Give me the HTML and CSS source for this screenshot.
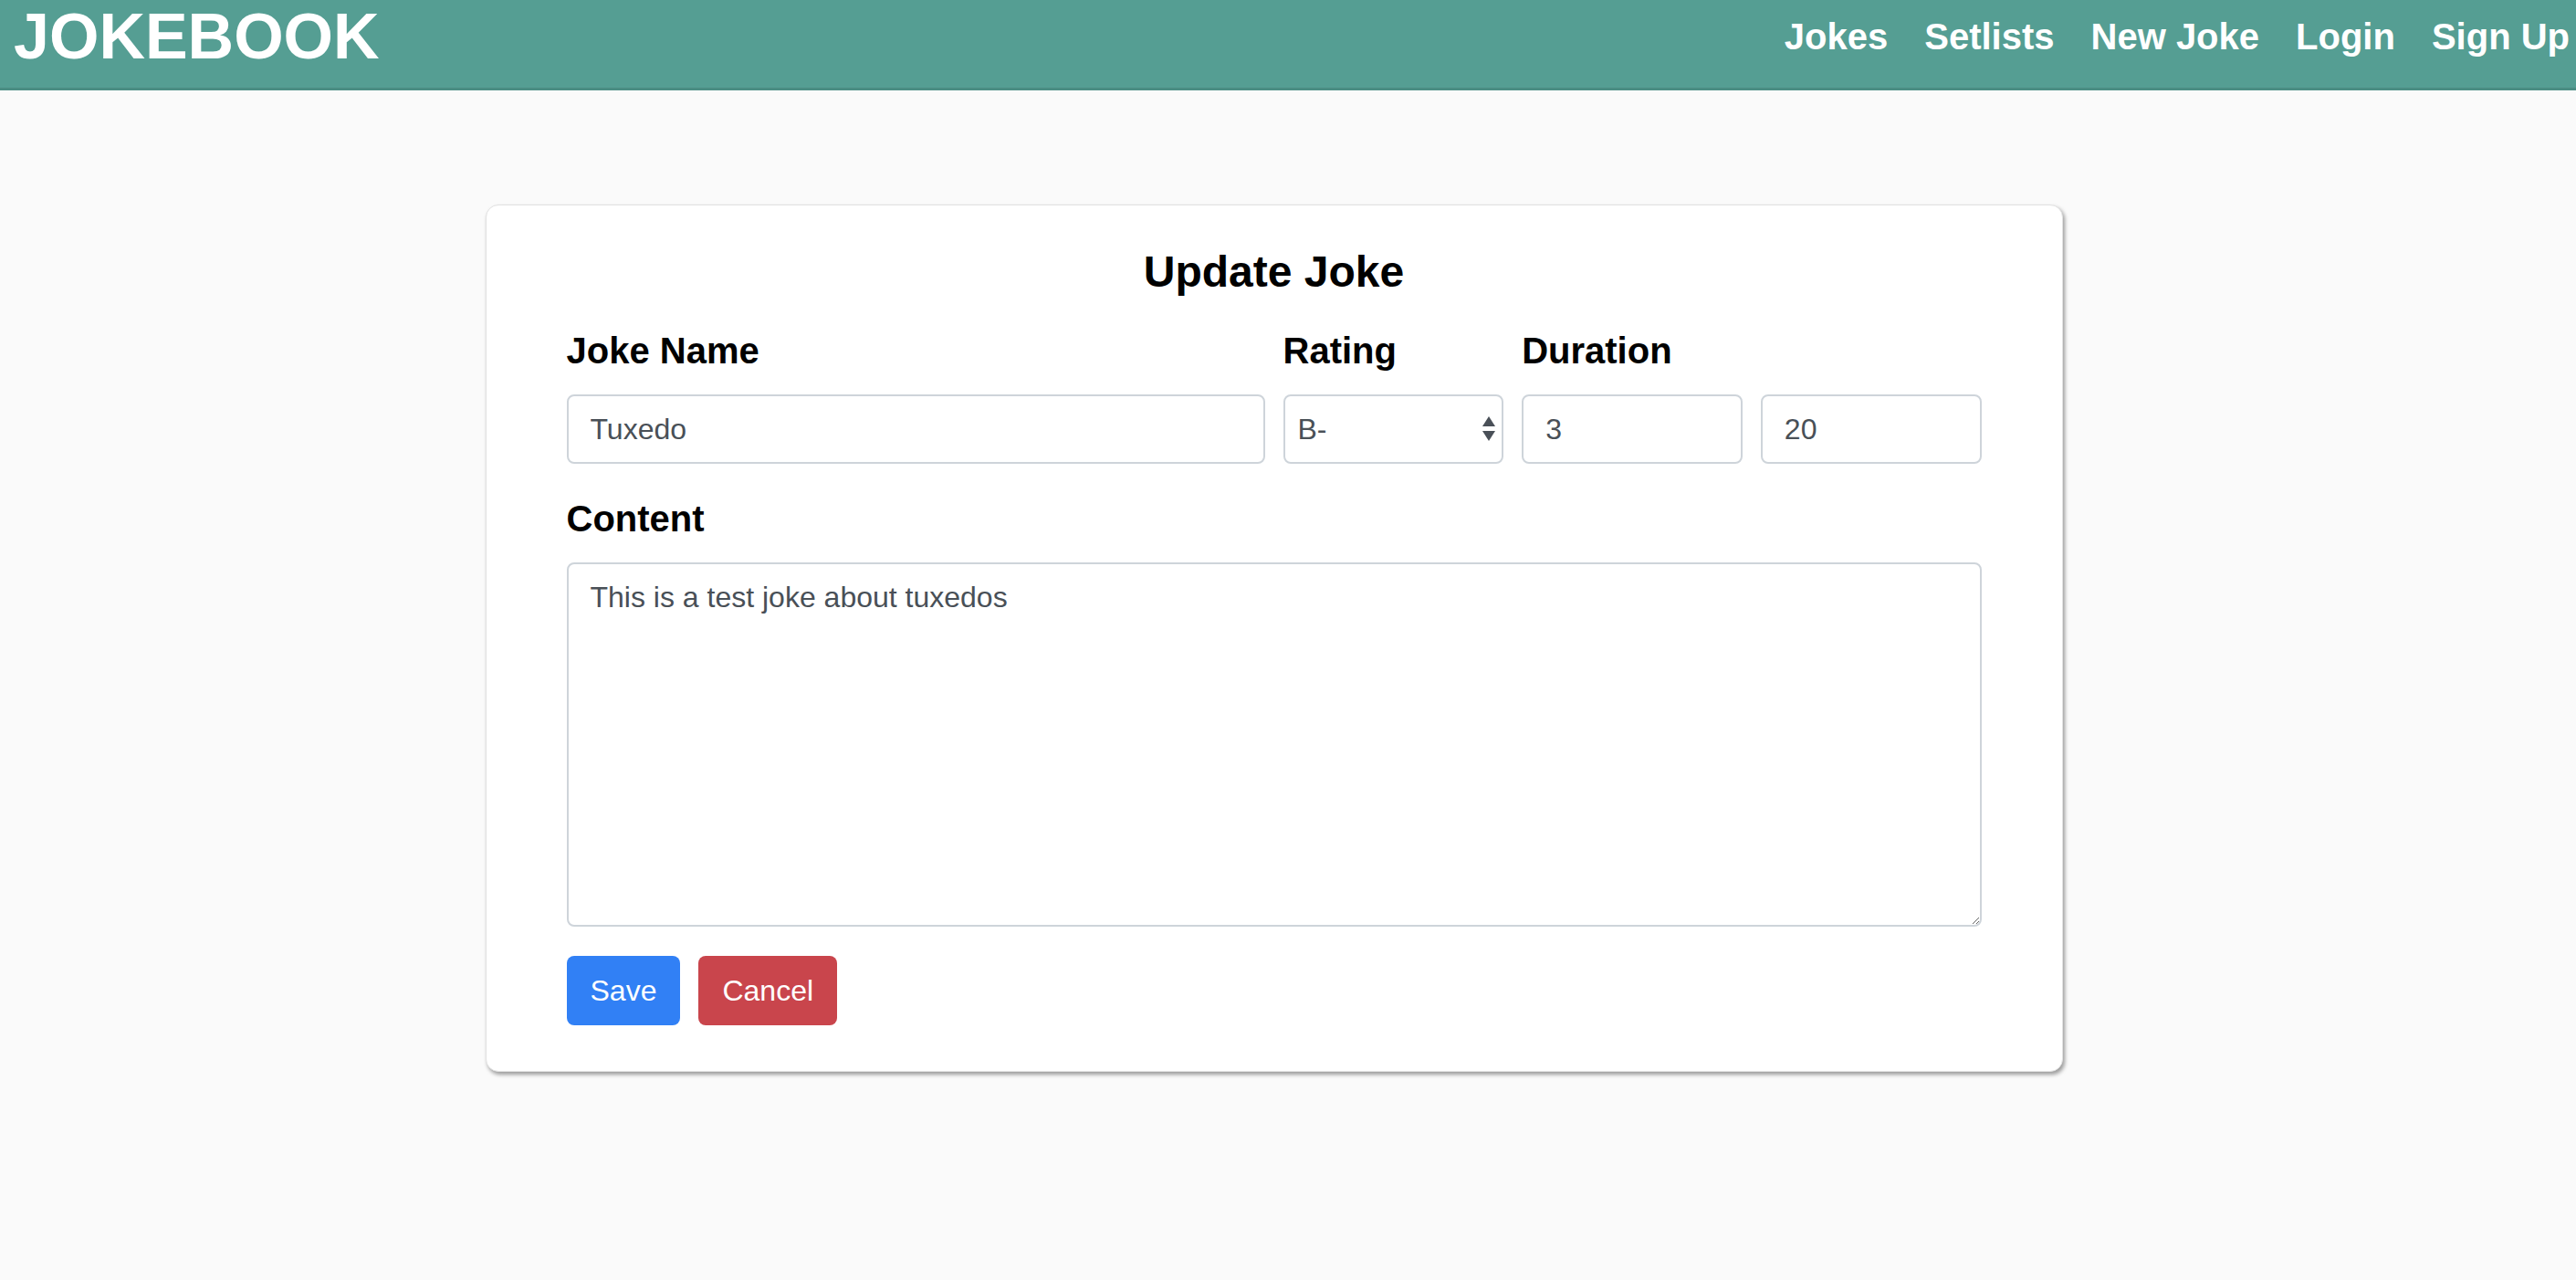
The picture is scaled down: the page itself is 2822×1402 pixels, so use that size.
FILE: index.html
```html
<!DOCTYPE html>
<html lang="en">
<head>
<meta charset="utf-8">
<title>Jokebook</title>
<link rel="stylesheet" href="styles.css">
</head>
<body>
<header class="navbar">
  <a class="brand" href="#">JOKEBOOK</a>
  <nav class="links">
    <a href="#">Jokes</a>
    <a href="#">Setlists</a>
    <a href="#">New Joke</a>
    <a href="#">Login</a>
    <a href="#">Sign Up</a>
  </nav>
</header>
<main class="main">
  <form class="card">
    <h2 class="title">Update Joke</h2>
    <div class="form-row">
      <div class="col">
        <label class="label" for="name">Joke Name</label>
        <input class="control" id="name" type="text" value="Tuxedo">
      </div>
      <div class="col">
        <label class="label" for="rating">Rating</label>
        <div class="select-wrap">
          <select class="control select" id="rating">
            <option>A+</option>
            <option>A</option>
            <option>B+</option>
            <option>B</option>
            <option selected>B-</option>
            <option>C</option>
          </select>
          <svg class="arrows" width="14" height="27" viewBox="0 0 14 27" aria-hidden="true">
            <polygon points="0,11 7,0 14,11" fill="#4a5058"/>
            <polygon points="0,16 14,16 7,27" fill="#4a5058"/>
          </svg>
        </div>
      </div>
      <div class="col">
        <label class="label" for="min">Duration</label>
        <input class="control" id="min" type="text" value="3">
      </div>
      <div class="col">
        <span class="label"></span>
        <input class="control" id="sec" type="text" value="20">
      </div>
    </div>
    <div class="group">
      <label class="label" for="content">Content</label>
      <textarea class="control area" id="content">This is a test joke about tuxedos</textarea>
    </div>
    <div class="actions">
      <button type="button" class="btn btn-save">Save</button>
      <button type="button" class="btn btn-cancel">Cancel</button>
    </div>
  </form>
</main>
</body>
</html>
```

FILE: styles.css
```css
* { box-sizing: border-box; }

html, body {
  margin: 0;
  padding: 0;
}

body {
  background: #fafafa;
  font-family: "Liberation Sans", Arial, Helvetica, sans-serif;
  color: #000;
  min-height: 1402px;
}

.navbar {
  display: flex;
  justify-content: space-between;
  align-items: flex-start;
  height: 99px;
  background: #559e93;
  border-bottom: 3px solid #4b8d83;
}

.brand {
  padding-left: 15px;
  font-size: 70px;
  line-height: 80px;
  font-weight: 700;
  color: #fff;
  text-decoration: none;
}

.links {
  display: flex;
  gap: 40px;
  padding-top: 16px;
  padding-right: 7px;
}

.links a {
  font-size: 40px;
  line-height: 48px;
  font-weight: 700;
  color: #fff;
  text-decoration: none;
}

.main {
  display: flex;
  justify-content: center;
  padding: 125px 31px 0 0;
}

.card {
  width: 1728px;
  background: #fff;
  border: 1px solid #e2e2e2;
  border-radius: 14px;
  box-shadow: 2px 3px 4px rgba(0, 0, 0, 0.38);
  padding: 44px 88px 50px 88px;
}

.title {
  margin: 0 0 29px;
  text-align: center;
  font-size: 48px;
  line-height: 58px;
  font-weight: 700;
}

.form-row {
  display: grid;
  grid-template-columns: calc(50% - 10px) 1fr 1fr 1fr;
  column-gap: 20px;
  margin-bottom: 32px;
}

.col {
  display: flex;
  flex-direction: column;
}

.label {
  display: block;
  height: 60px;
  margin-bottom: 16px;
  font-size: 40px;
  line-height: 57px;
  font-weight: 700;
}

.control {
  display: block;
  width: 100%;
  height: 76px;
  padding: 12px 24px;
  font-family: "Liberation Sans", Arial, Helvetica, sans-serif;
  font-size: 32px;
  line-height: 48px;
  color: #495057;
  background: #fff;
  border: 2px solid #ced4da;
  border-radius: 8px;
  outline: none;
}

.select-wrap {
  position: relative;
}

.select {
  -webkit-appearance: none;
  appearance: none;
  padding: 12px 14px;
}

.arrows {
  position: absolute;
  right: 9px;
  top: 24px;
  pointer-events: none;
}

.group {
  margin-bottom: 32px;
}

.area {
  height: 399px;
  resize: both;
}

.actions {
  display: flex;
  gap: 20px;
}

.btn {
  height: 76px;
  padding: 12px 24px;
  font-family: "Liberation Sans", Arial, Helvetica, sans-serif;
  font-size: 32px;
  line-height: 48px;
  color: #fff;
  border: 2px solid transparent;
  border-radius: 8px;
}

.btn-save {
  background: #3180f5;
}

.btn-cancel {
  background: #c9454c;
}
```
